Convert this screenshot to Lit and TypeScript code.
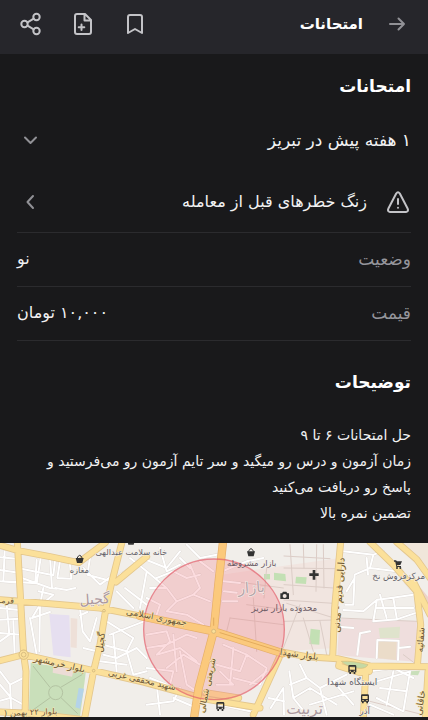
import { LitElement, html, svg, css } from "lit";
import { customElement } from "lit/decorators.js";

// Map drawing units: three per CSS pixel on a phone-wide window.
const blocks: [string, string][] = [
  ["M92 374L258 398L240 537H86Z", "#c9dfba"],
  ["M148 228L208 232L212 358L160 352Z", "#e6dff0"],
  ["M212 240L232 242L230 330L212 328Z", "#eee0d8"],
  ["M160 384L222 392L216 416L158 404Z", "#ecdcd6"],
  ["M236 450L252 452L240 512L226 508Z", "#b4d3e8"],
  ["M664 110L1020 60L1008 330L850 340L650 280Z", "#f1e5e0"],
  ["M1018 242L1250 250L1254 372L1012 352Z", "#efdedd"],
  ["M1136 270L1200 266L1198 300L1140 300Z", "#dfe3cc"],
  ["M1130 308L1190 308L1188 366L1130 360Z", "#ebdcc9"],
  ["M932 272L960 276L958 320L928 318Z", "#c3e0b4"],
  ["M888 116L920 118L918 138L886 136Z", "#c3e0b4"],
  ["M822 104L856 108L858 130L822 126Z", "#c3e0b4"],
  ["M792 108L810 108L810 124L792 124Z", "#c3e0b4"],
  ["M1232 400L1260 398L1254 412L1230 410Z", "#c9dfba"],
  ["M1178 16L1284 110V15Z", "#f0e6da"],
  ["M1262 150L1284 176V222L1256 180Z", "#ecd3c8"],
];
const streets =
  "M0 58L50 62M0 96L56 104M14 40L10 130L110 136L122 60M0 130L56 134M64 92L160 112L166 60M66 120L150 150L170 152M110 66L106 130M180 70L172 120L214 122L210 80M166 150L200 156L226 150M270 60L262 110L330 128M250 90L300 140L330 118M150 58L156 150M116 160L160 170L130 195M130 150L120 200L96 240L150 222M90 240L110 350M120 200L118 340M0 210L56 216M0 245L60 242M0 285L64 290M20 200L28 290L0 310M40 250L44 350M0 400L30 440L70 420M0 440L34 480L70 500M30 440L34 520M0 488L30 480M240 212L248 280L270 310L290 240M262 222L240 232M320 250L400 300L380 340L310 320M330 290L432 250M310 350L350 360L410 330L440 360M340 290L350 400M380 340L400 410L440 400M300 370L380 380M375 150L440 200M360 110L440 60M390 60L440 100L420 210M350 160L400 210M250 330L290 340" +
  "M440 66L500 90L540 40M480 30L500 100L540 80M560 20L600 60L650 50M440 100L500 150L530 190L500 220M530 190L580 170L630 190M470 120L520 100L560 120L600 110M570 80L600 150L580 170M600 70L640 100M540 60L570 90M440 180L480 200L470 230M450 150L500 150M500 220L560 230L610 260M440 290L500 280L510 310L470 350M440 330L500 320L560 290L590 300M470 350L540 330L590 370M500 390L550 350L600 380M440 390L520 400L510 440M540 340L560 440L590 460M450 420L500 440M440 500L520 490L540 450M470 440L480 530M520 480L590 510M520 290L530 400M670 320L740 350L720 400L650 380M740 350L800 390L780 440L700 420M700 330L690 440M660 400L700 440L650 440M670 130L720 135M672 160L710 164M668 190L712 190M676 96L740 70L790 60M660 500L750 520M800 400L750 440M806 480L852 490M812 510L850 450L852 530M770 500L790 450" +
  "M1030 40L1120 50L1110 90L1064 110L1060 200L1036 200M1120 50L1150 40M1110 90L1190 100L1230 150M1064 120L1040 160M1030 216L1090 220L1130 186L1240 170M1130 190L1120 250L1190 244L1250 224M1140 170L1160 240M1180 180L1190 240M1130 210L1240 210M1100 60L1104 110M1016 266L1060 270M1110 280L1080 286L1072 350M1130 360L1132 306L1196 308L1194 366M1196 330L1230 326M868 400L880 480L930 450L1010 500M870 440L920 420L900 380M920 420L960 450L1040 410M960 450L980 530M880 480L920 530M930 500L1060 460M1110 400L1180 390L1240 420M1130 430L1230 400L1210 520L1130 480M1180 400L1160 500M1140 450L1220 460M1110 500L1180 530M1000 430L1060 500";
const lanes =
  "M852 54L990 62M852 90L1004 92M870 20L880 170M910 20L912 90M950 20L948 160M852 140L1000 150M852 186L1000 196M860 196L1002 240M970 20L972 150M852 250L1000 246M900 200L850 330M910 240L940 340M960 250L980 350M690 240L850 260M760 180L770 340M690 240L680 280M700 130L850 150M800 90L792 180M740 200L852 214M1250 380L1210 350M1020 240L1150 246L1254 250M1110 490L1284 534";
const yellow =
  "M0 22L55 38L150 56L236 74L316 14M52 12L62 190L71 350L78 400L75 540M0 185L62 190L300 210L430 236M366 12L336 130L318 210L300 320L281 398L254 540M440 56L348 132M0 368L71 350L280 398L430 432L540 462L620 484L780 510M0 522L90 526L250 545M617 464L716 480M837 360L760 530M845 342L920 356L1012 362L1110 384L1284 386M1022 12L1004 210L998 360M1110 12L1180 80L1250 160L1262 260L1252 384M1190 12L1250 64L1290 120M1098 386L1090 540M1284 400L1276 540M1240 130L1290 230M1108 400L1086 392L1020 364L1016 384L1080 404L1108 396";
const orange = "M669 12L655 140L641 280L596 450L582 540M420 234L641 280L848 346";

const label = (x: number, y: number, size: number, text: string, kind = "place", turn = 0) =>
  svg`<text class=${kind} font-size=${size} transform="translate(${x} ${y}) rotate(${turn})">${text}</text>`;
const basket = (x: number, y: number) =>
  svg`<g transform="translate(${x} ${y})" class="poi"><path d="M-12-3H12L8 12H-8Z"/><path d="M-8-2Q0-20 8-2" fill="none" stroke="#333" stroke-width="3"/></g>`;
const bus = (x: number, y: number) =>
  svg`<g transform="translate(${x} ${y})" class="poi"><path fill-rule="evenodd" d="M-8-13H8Q12-13 12-9V9H9V14H4V9H-4V14H-9V9H-12V-9Q-12-13-8-13ZM-8-8V1H8V-8ZM-8 4V7H-4V4ZM4 4V7H8V4Z"/></g>`;

@customElement("area-map")
class AreaMap extends LitElement {
  static styles = css`
    :host { display: block; background: #f1eeea; }
    svg { display: block; width: 100%; height: auto; }
    text { font-family: "DejaVu Sans", sans-serif; text-anchor: middle; direction: rtl;
      stroke: #f7f2ec; stroke-width: 3px; paint-order: stroke; stroke-linejoin: round; }
    .place { fill: #5f5e68; }
    .plain { fill: #6b5a64; stroke: none; }
    .road { fill: #6a5434; stroke: #fbe7ae; }
    .area { fill: #ab989e; }
    .poi { fill: #333; }
    .line { fill: none; stroke-linejoin: round; stroke-linecap: round; }
  `;
  render() {
    return html`<svg viewBox="0 15 1284 522" role="img" aria-label="نقشه">
      ${blocks.map(([d, c]) => svg`<path d=${d} fill=${c} />`)}
      <path class="line" d=${lanes} stroke="#dccdc7" stroke-width="3" />
      <path class="line" d=${streets} stroke="#dcd6d2" stroke-width="8" />
      <path class="line" d=${streets} stroke="#fff" stroke-width="6" />
      <path class="line" d="M100 385L150 448M182 448L246 410M152 478L96 518M184 480L232 526" stroke="#b3c3a2" stroke-width="3" />
      <circle cx="167" cy="464" r="21" fill="#c9dfba" stroke="#b3c3a2" stroke-width="3" />
      <path class="line" d=${yellow} stroke="#e3c68d" stroke-width="21" />
      <path class="line" d=${yellow} stroke="#fbe09a" stroke-width="16" />
      <path d="M1024 370Q1060 368 1104 380Q1098 392 1078 391Q1040 388 1024 370Z" fill="#c5d9a4" stroke="#d6bd78" stroke-width="2" />
      <circle cx="642" cy="274" r="211" fill="#f0606c" fill-opacity=".22" />
      <path class="line" d=${orange} stroke="#e5ae6a" stroke-width="25" />
      <path class="line" d=${orange} stroke="#fbc97c" stroke-width="21" />
      <path class="line" d="M641 240V262M660 284L840 340" stroke="#d79b4b" stroke-width="2" />
      <g fill="#fbe09a" stroke="#c9ad76" stroke-width="2">
        <circle cx="71" cy="350" r="14" /><circle cx="71" cy="350" r="7" />
        <circle cx="641" cy="280" r="6" /><circle cx="312" cy="218" r="4" /><circle cx="281" cy="398" r="4" />
      </g>
      <circle cx="642" cy="274" r="211" fill="none" stroke="#e2606c" stroke-opacity=".7" stroke-width="4" />
      <g fill-opacity=".85">${label(755, 164, 44, "بازار", "area", -4)}</g>
      ${label(285, 198, 42, "گجیل", "area", -4)}
      ${label(914, 528, 46, "تربیت", "area")}
      ${label(238, 106, 25, "مغازه")}
      ${label(394, 52, 25, "خانه سلامت عبدالهی")}
      ${label(755, 84, 25, "بازار مشروطه", "plain")}
      ${label(853, 220, 26, "محدوده بازار تبریز", "plain")}
      ${label(1196, 122, 26, "مرکزفروش نخ")}
      ${label(1057, 440, 27, "ایستگاه شهدا")}
      ${label(1094, 528, 26, "آذر")}
      ${label(19, 196, 24, "قرمـ", "road", 4)}
      ${label(468, 246, 27, "جمهوری اسلامی", "road", 11)}
      ${label(311, 314, 28, "گجیل", "road", -82)}
      ${label(176, 386, 27, "بلوار خرمشهر", "road", 13)}
      ${label(424, 434, 26, "شهید محققی غربی", "road", 13)}
      ${label(92, 531, 25, "بلوار ۲۲ بهمن (", "road", -2)}
      ${label(630, 444, 26, "شریعتی شمالی", "road", -78)}
      ${label(896, 358, 27, "بلوار شهدا", "road", 8)}
      ${label(1026, 172, 28, "دارایی قدیم - مدنی", "road", -86)}
      ${label(1271, 306, 27, "شفائیه", "road", -86)}
      ${label(1270, 496, 27, "خاقانی", "road", -80)}
      ${basket(239, 63)} ${basket(753, 43)} ${basket(393, 8)}
      ${bus(1057, 394)} ${bus(1095, 482)} ${bus(661, 505)}
      <g class="poi">
        <path d="M938 96H946V106H956V114H946V125H938V114H928V106H938Z" />
        <path fill-rule="evenodd" d="M841 166H846L849 161H859L862 166H867V183H841ZM854 168A6 6 0 1 0 854 180A6 6 0 1 0 854 168Z" />
        <path d="M1182 67H1188L1191 70H1206L1201 81H1190L1192 84H1203V87H1189L1186 71H1182Z" /><circle cx="1191" cy="90" r="3" /><circle cx="1201" cy="90" r="3" />
      </g>
    </svg>`;
  }
}

@customElement("app-root")
class AppRoot extends LitElement {
  static styles = css`
    :host { display: block; min-height: 100vh; background: #19191b; color: #f2f2f3;
      font-family: "DejaVu Sans", sans-serif; direction: rtl; }
    * { box-sizing: border-box; }
    header { display: flex; align-items: center; height: 54px; padding: 0 19px 6px; background: #26262b; }
    button { display: flex; align-items: center; padding: 0; border: 0; background: none;
      color: inherit; font: inherit; cursor: pointer; }
    svg.icon { display: block; flex: none; fill: none; stroke: #c3c3c7; stroke-width: 2;
      stroke-linecap: round; stroke-linejoin: round; }
    svg.dim { stroke: #919196; }
    .bar-title { margin: 0 22px 0 auto; font-size: 15px; line-height: 24px; font-weight: 700; color: #fff; }
    .actions { display: flex; gap: 28px; }
    main { padding: 16px 17px 17px; }
    h2 { margin: 0; font-size: 17px; line-height: 32px; font-weight: 700; color: #fff; }
    .row { width: 100%; height: 62px; justify-content: space-between; font-size: 16px; }
    .when { margin-top: 7px; }
    .warn { border-bottom: 1px solid #2b2b2e; }
    .lead { display: flex; align-items: center; gap: 18px; }
    dl { margin: 0 0 25px; }
    .spec { display: flex; align-items: center; justify-content: space-between; height: 54px;
      padding-bottom: 2px; border-bottom: 1px solid #2b2b2e; font-size: 16px; }
    .when, dt { font-size: 17px; }
    dt { color: #95959b; }
    dd { margin: 0; }
    .text { margin: 24px 0 0; font-size: 14px; line-height: 26px; white-space: pre-line; }
    footer { height: 3px; background: #19191b; }
  `;
  render() {
    return html`
      <header>
        <button aria-label="بازگشت"><svg class="icon dim" width="24" height="24" viewBox="0 0 24 24"><path d="M5 12H19M13.500 6.500L19 12L13.500 17.500" /></svg></button>
        <h1 class="bar-title">امتحانات</h1>
        <div class="actions">
          <button aria-label="نشان کردن"><svg class="icon" width="24" height="24" viewBox="0 0 24 24"><path d="M5 21V5Q5 3 7 3H17Q19 3 19 5V21L12 17Z" /></svg></button>
          <button aria-label="یادداشت"><svg class="icon" width="24" height="24" viewBox="0 0 24 24"><path d="M14 2H6Q4 2 4 4V20Q4 22 6 22H18Q20 22 20 20V8ZM13.500 2V8.500H20M10.500 12.500V18M7.700 15.200H13.300" /></svg></button>
          <button aria-label="اشتراک"><svg class="icon" width="24" height="24" viewBox="0 0 24 24"><circle cx="17.500" cy="5" r="3.200" /><circle cx="5.500" cy="12" r="3.200" /><circle cx="17.500" cy="19" r="3.200" /><path d="M8.500 10.300L14.700 6.700M8.500 13.700L14.700 17.300" /></svg></button>
        </div>
      </header>
      <main>
        <h2>امتحانات</h2>
        <button class="row when"><span>۱ هفته پیش در تبریز</span>
          <svg class="icon dim" width="26" height="24" viewBox="0 0 26 24"><path d="M8 9.500L13.500 15L19 9.500" /></svg></button>
        <button class="row warn"><span class="lead">
            <svg class="icon" width="26" height="26" viewBox="0 0 26 26"><path d="M11.200 4.500Q13 2 14.800 4.500L22.600 19.500Q24 22.500 21 23H5Q2 22.500 3.400 19.500ZM13 10V15M13 18.700V18.800" /></svg>
            زنگ خطرهای قبل از معامله</span>
          <svg class="icon dim" width="26" height="24" viewBox="0 0 26 24"><path d="M16 6L10.500 12L16 18" /></svg></button>
        <dl>
          <div class="spec"><dt>وضعیت</dt><dd>نو</dd></div>
          <div class="spec"><dt>قیمت</dt><dd>۱۰,۰۰۰ تومان</dd></div>
        </dl>
        <h2>توضیحات</h2>
        <p class="text">حل امتحانات ۶ تا ۹
زمان آزمون و درس رو میگید و سر تایم آزمون رو می‌فرستید و پاسخ رو دریافت می‌کنید
تضمین نمره بالا</p>
      </main>
      <area-map></area-map>
      <footer></footer>`;
  }
}
